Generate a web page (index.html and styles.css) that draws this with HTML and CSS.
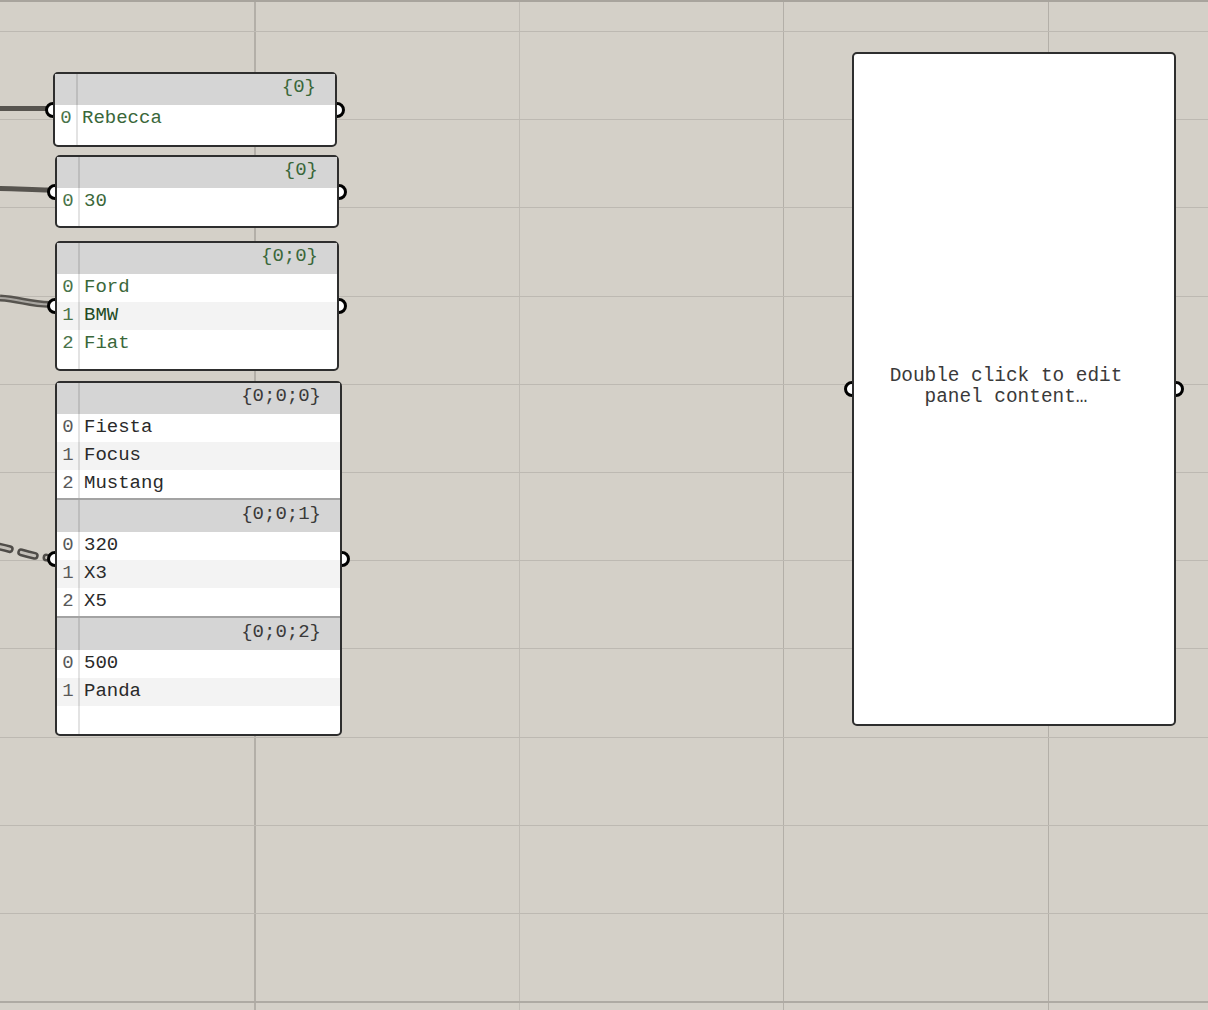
FILE: index.html
```html
<!DOCTYPE html>
<html>
<head>
<meta charset="utf-8">
<link rel="stylesheet" href="styles.css">
</head>
<body>
<div class="canvas">
  <svg class="wires" width="60" height="1010" viewBox="0 0 60 1010">
    <path class="w" d="M0,108.5 L50,108.5"/>
    <path class="w" d="M0,188.5 C20,188.5 30,190 50,190"/>
    <path class="w2" d="M0,298 C20,299 28,304 50,304.5"/>
    <path class="w2in" d="M0,298 C20,299 28,304 50,304.5"/>
    <path class="w3" d="M-4,546 C18,550 30,557 52,558"/>
    <path class="w3in" d="M-4,546 C18,550 30,557 52,558"/>
  </svg>

  <div class="node green n1">
    <span class="grip in"></span><span class="grip out"></span>
    <div class="hdr"><span class="idx"></span><span class="path">{0}</span></div>
    <div class="row"><span class="idx">0</span><span class="val">Rebecca</span></div>
    <div class="end"><span class="idx"></span></div>
  </div>

  <div class="node green n2">
    <span class="grip in"></span><span class="grip out"></span>
    <div class="hdr"><span class="idx"></span><span class="path">{0}</span></div>
    <div class="row"><span class="idx">0</span><span class="val">30</span></div>
    <div class="end"><span class="idx"></span></div>
  </div>

  <div class="node green n3">
    <span class="grip in"></span><span class="grip out"></span>
    <div class="hdr"><span class="idx"></span><span class="path">{0;0}</span></div>
    <div class="row"><span class="idx">0</span><span class="val">Ford</span></div>
    <div class="row alt"><span class="idx">1</span><span class="val dark">BMW</span></div>
    <div class="row"><span class="idx">2</span><span class="val">Fiat</span></div>
    <div class="end"><span class="idx"></span></div>
  </div>

  <div class="node plain n4">
    <span class="grip in"></span><span class="grip out"></span>
    <div class="hdr"><span class="idx"></span><span class="path">{0;0;0}</span></div>
    <div class="row"><span class="idx">0</span><span class="val">Fiesta</span></div>
    <div class="row alt"><span class="idx">1</span><span class="val">Focus</span></div>
    <div class="row"><span class="idx">2</span><span class="val">Mustang</span></div>
    <div class="hdr sep"><span class="idx"></span><span class="path">{0;0;1}</span></div>
    <div class="row"><span class="idx">0</span><span class="val">320</span></div>
    <div class="row alt"><span class="idx">1</span><span class="val">X3</span></div>
    <div class="row"><span class="idx">2</span><span class="val">X5</span></div>
    <div class="hdr sep"><span class="idx"></span><span class="path">{0;0;2}</span></div>
    <div class="row"><span class="idx">0</span><span class="val">500</span></div>
    <div class="row alt"><span class="idx">1</span><span class="val">Panda</span></div>
    <div class="end"><span class="idx"></span></div>
  </div>

  <div class="node panel">
    <span class="grip in"></span><span class="grip out"></span>
    <p class="hint">Double click to edit<br>panel content…</p>
  </div>
</div>
</body>
</html>
```

FILE: styles.css
```css
html, body {
  margin: 0;
  padding: 0;
}
body {
  width: 1208px;
  height: 1010px;
  overflow: hidden;
  background: #d4d0c8;
  font-family: "Liberation Mono", "Courier New", monospace;
}
.canvas {
  position: relative;
  z-index: 0;
  width: 1208px;
  height: 1010px;
  background-color: #d4d0c8;
  background-image:
    linear-gradient(#a8a49d, #a8a49d),
    linear-gradient(#aeaaa3, #aeaaa3),
    repeating-linear-gradient(to bottom, #bdb9b2 0 1px, transparent 1px 88.2px),
    linear-gradient(to right, #b3afa8, #b3afa8),
    linear-gradient(to right, #c0bcb5, #c0bcb5),
    linear-gradient(to right, #b3afa8, #b3afa8),
    linear-gradient(to right, #b3afa8, #b3afa8);
  background-size:
    100% 2px,
    100% 2px,
    100% 100%,
    2px 100%,
    1px 100%,
    1px 100%,
    1px 100%;
  background-position:
    0 0,
    0 1001px,
    0 31px,
    254px 0,
    519px 0,
    783px 0,
    1048px 0;
  background-repeat: no-repeat, no-repeat, repeat-y, no-repeat, no-repeat, no-repeat, no-repeat;
}
.wires {
  position: absolute;
  left: 0;
  top: 0;
  z-index: -1;
}
.wires path { fill: none; }
.w { stroke: #57544f; stroke-width: 5; }
.w2 { stroke: #57544f; stroke-width: 7; }
.w2in { stroke: #a8a5a0; stroke-width: 2; }
.w3 { stroke: #4f4c48; stroke-width: 8; stroke-dasharray: 14 12; stroke-linecap: round; }
.w3in { stroke: #c2beb7; stroke-width: 3; stroke-dasharray: 14 12; stroke-linecap: round; }

.node {
  position: absolute;
  box-sizing: border-box;
  background: #fff;
  border: 2px solid #2e2e2e;
  border-radius: 5px;
  font-size: 19px;
  display: flex;
  flex-direction: column;
}
.n1 { left: 53px; top: 72px; width: 284px; height: 75px; }
.n2 { left: 55px; top: 155px; width: 284px; height: 73px; }
.n3 { left: 55px; top: 241px; width: 284px; height: 130px; }
.n4 { left: 55px; top: 381px; width: 287px; height: 355px; }
.panel {
  left: 852px;
  top: 52px;
  width: 324px;
  height: 674px;
  align-items: center;
  justify-content: center;
  padding-right: 16px;
}

.grip {
  position: absolute;
  z-index: -1;
  top: 50%;
  width: 10px;
  height: 10px;
  margin-top: -8px;
  border: 3px solid #000;
  border-radius: 50%;
  background: #fff;
}
.grip.in { left: -10px; }
.grip.out { right: -10px; }

.hdr, .row, .end {
  display: grid;
  grid-template-columns: 23px 1fr;
  flex: none;
}
.idx {
  border-right: 2px solid rgba(0, 0, 0, 0.11);
  text-align: center;
  padding-left: 1px;
}
.hdr {
  height: 31px;
  background: #d5d5d5;
  line-height: 26px;
}
.hdr.sep {
  height: 34px;
  box-sizing: border-box;
  border-top: 2px solid #a3a3a3;
  line-height: 29px;
}
.path {
  text-align: right;
  padding-right: 19px;
}
.row {
  height: 28px;
  line-height: 26px;
}
.row.alt { background: #f3f3f3; }
.val { padding-left: 4px; }
.end { flex: 1 1 auto; }

.green { color: #3a673a; }
.green .idx { color: #4a744a; }
.green .val.dark { color: #234a23; }
.plain { color: #2a2a2a; }
.plain .idx { color: #5a5a5a; }
.plain .path { color: #3a3a3a; }

.hint {
  margin: 0 0 4px 0;
  text-align: center;
  line-height: 21px;
  color: #3a3a3a;
  font-size: 19.4px;
}
```
